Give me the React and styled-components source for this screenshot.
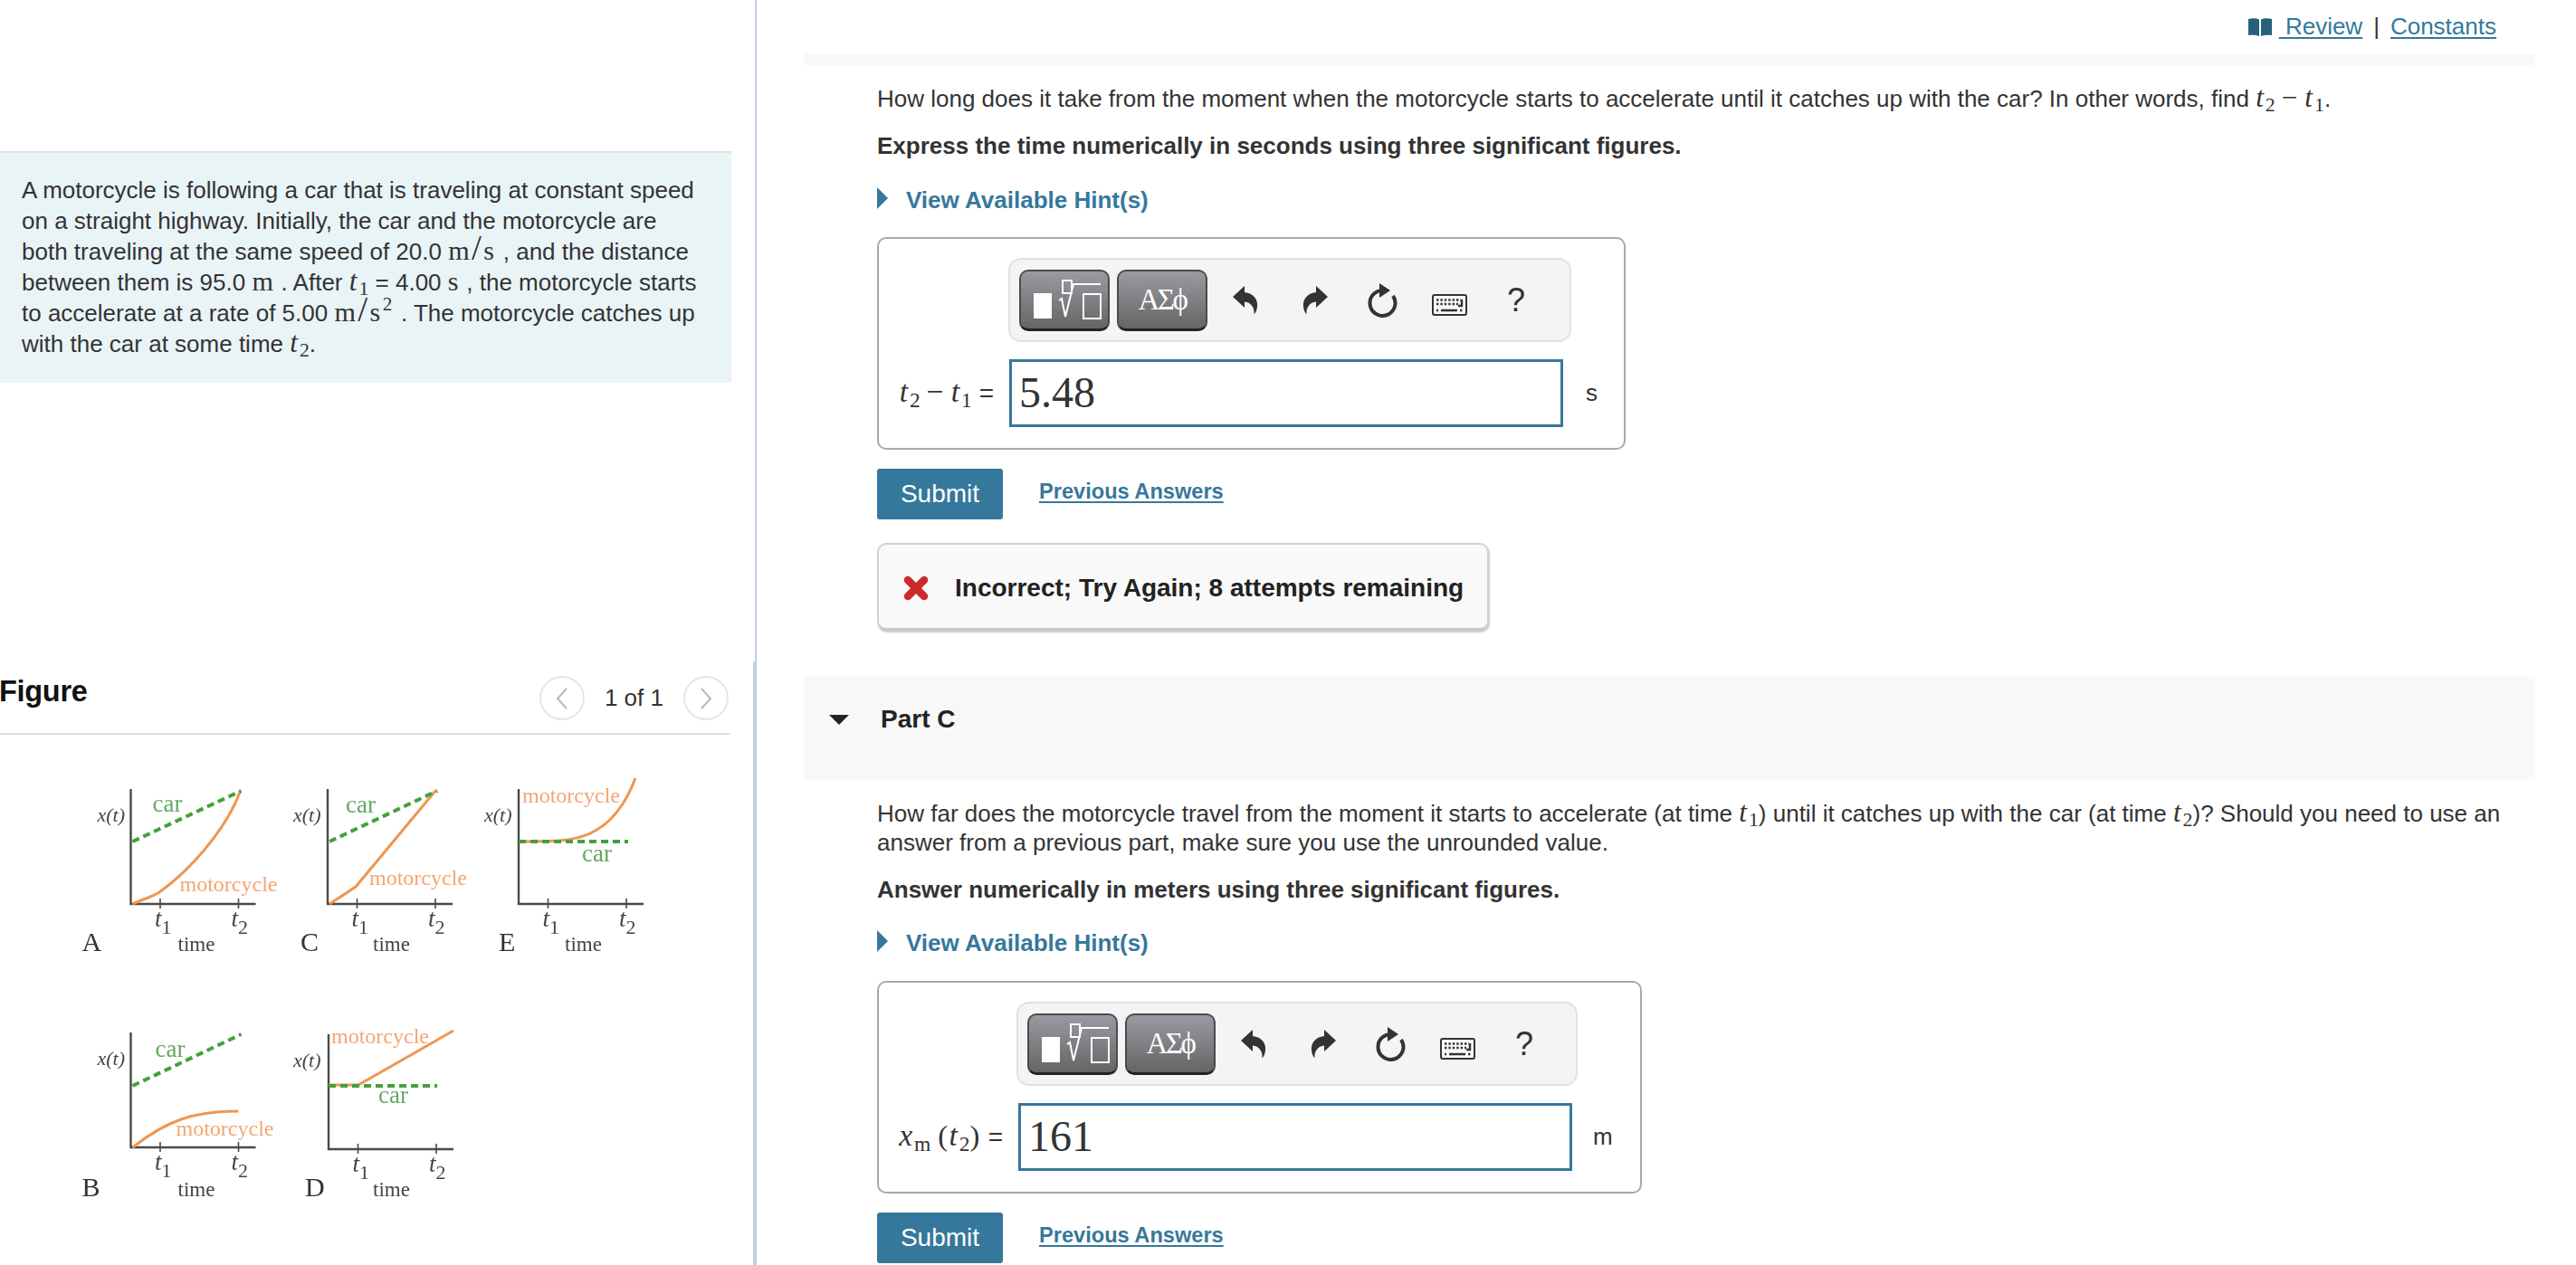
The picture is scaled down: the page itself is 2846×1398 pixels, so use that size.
import React from 'react';
import styled, { createGlobalStyle } from 'styled-components';

const Global = createGlobalStyle`
  html, body { margin: 0; padding: 0; background: #fff; }
  body { font-family: "Liberation Sans", Arial, sans-serif; color: #333; overflow: hidden; }
  * { box-sizing: border-box; }
`;

const Page = styled.div`display: flex; width: 2846px; height: 1398px; overflow: hidden;`;
const LeftColumn = styled.aside`display: flex; flex-direction: column; width: 836px; flex: none;`;
const Intro = styled.section`height: 731px; padding-top: 167px; border-right: 2px solid #c0cfe2;`;
const IntroBox = styled.div`
  width: 808px; height: 256px; padding: 24px 0 0 24px;
  background: #e9f4f7; border-top: 2px solid #dfe0e2;
  font-size: 26px; line-height: 34px; color: #333; white-space: nowrap;
`;
const FigurePane = styled.section`flex: 1; border-right: 4px solid #c0cfe2; min-height: 0;`;
const FigureHeader = styled.div`
  display: flex; align-items: center; justify-content: space-between;
  width: 806px; height: 81px; padding: 17px 1px 15px 0;
  border-bottom: 2px solid #dcdcdc;
`;
const FigureTitle = styled.h2`margin: -15px 0 0 -1px; font-size: 32.5px; font-weight: 700; color: #111; letter-spacing: -.3px;`;
const Pager = styled.div`display: flex; align-items: center; gap: 22px; font-size: 26px; color: #333;`;
const PagerButton = styled.span`
  display: flex; align-items: center; justify-content: center;
  width: 50px; height: 49px; border: 2px solid #e6e6e6; border-radius: 50%; color: #b9b9b9;
`;
const FigureSvg = styled.svg`display: block; filter: blur(.55px);`;

const RightColumn = styled.main`flex: 1; min-width: 0; padding-left: 52px;`;
const TopLinks = styled.nav`
  display: flex; justify-content: flex-end; align-items: center; height: 59px; gap: 8px;
  padding: 10px 88px 10px 0; font-size: 26px; color: #333;
`;
const TextLink = styled.a`color: #36789b; text-decoration: underline; text-underline-offset: 3px; text-decoration-thickness: 2px;`;
const Sep = styled.span`margin: 0 4px; font-size: 26px;`;
const Strip = styled.div`height: 13px; width: 1912px; background: #f8f8f8;`;
const Content = styled.div`padding-left: 81px;`;
const Para = styled.p`
  margin: ${p => p.$top}px 0 0; font-size: 26px; line-height: ${p => p.$lh || 34}px;
  font-weight: ${p => (p.$bold ? 700 : 400)}; color: #333; white-space: nowrap;
`;
const Hint = styled.div`
  display: flex; align-items: center; height: 34px; margin-top: ${p => p.$top}px;
  font-size: 26px; font-weight: 700; color: #36789b; gap: 20px;
`;
const Caret = styled.i`
  width: 0; height: 0; border-style: solid; border-width: 12px 0 12px 12px;
  border-color: transparent transparent transparent #36789b; margin-top: -4px;
`;
const AnswerBox = styled.div`
  width: ${p => p.$w}px; height: ${p => p.$h}px; margin-top: ${p => p.$top}px;
  border: 2px solid #a9a9a9; border-radius: 10px; padding: 21px 0 0 ${p => p.$toolLeft}px;
  background: #fff;
`;
const Toolbar = styled.div`
  display: flex; align-items: center; width: ${p => p.$w}px; height: 93px; padding: 0 0 0 10px;
  background: #f4f4f4; border: 2px solid #e1e1e1; border-radius: 14px;
`;
const PaletteButton = styled.button`
  display: flex; align-items: center; justify-content: center; padding: 0; flex: none;
  width: 100px; height: 68px; margin-right: 8px;
  background: linear-gradient(#9b9aa3, #656565);
  border: 2px solid #4b4b4b; border-bottom: 3px solid #222; border-radius: 10px;
  color: #fff; font: 33px "Liberation Serif", serif; letter-spacing: -2.5px;
`;
const ToolIcon = styled.span`
  display: flex; justify-content: center; align-items: center; flex: none; width: ${p => p.$w}px; color: #333;
  font-size: 36px; line-height: 1; height: 60px; padding-top: ${p => p.$drop || 0}px;
`;
const InputRow = styled.div`
  display: flex; align-items: center; height: 75px; margin: ${p => p.$gap}px 0 0 ${p => p.$left}px;
`;
const MathLabel = styled.label`
  flex: none; width: ${p => p.$w}px; padding-right: 17px; text-align: right; white-space: nowrap;
  font-size: 28px; line-height: 1; color: #333;
`;
const ValueField = styled.div`
  width: ${p => p.$w}px; height: 75px; padding-left: 8px;
  border: 3px solid #36789b; background: #fff;
  font: 48px/67px "Liberation Serif", serif; color: #333;
`;
const Unit = styled.span`margin-left: ${p => p.$gap}px; font-size: 26px; color: #333;`;
const ActionRow = styled.div`display: flex; align-items: center; gap: 40px; margin-top: 21px;`;
const Submit = styled.button`
  width: 139px; height: 56px; padding: 0; border: 0; border-radius: 3px;
  background: #36789b; color: #fff; font: 28px "Liberation Sans", sans-serif;
`;
const PrevLink = styled(TextLink)`font-size: 23.6px; font-weight: 700; margin-top: -6px;`;
const Feedback = styled.div`
  display: flex; align-items: center; gap: 29px; width: 676px; height: 97px; margin-top: 26px;
  padding: 4px 0 0 27px; background: #f9f9f9; border: 2px solid #d0d0d0;
  border-bottom: 3px solid #c8c8c8; border-radius: 10px; box-shadow: 1px 2px 2px #ccc;
  font-size: 28px; font-weight: 700; color: #222; white-space: nowrap;
`;
const PartHeader = styled.div`
  display: flex; align-items: center; width: 1912px; height: 113px; margin-top: 51px;
  padding: 0 0 19px 28px; background: #f8f8f8; font-size: 28px; font-weight: 700; color: #222;
`;
const PartCaret = styled.i`
  width: 0; height: 0; margin-right: 35px; border-style: solid; border-width: 11px 11px 0 11px;
  border-color: #222 transparent transparent transparent;
`;
const MathText = styled.span`font-family: "Liberation Serif", serif; font-size: 1.16em; letter-spacing: 1.5px; line-height: 0;`;
const UnitFraction = styled(MathText)`letter-spacing: 2.4px;`;
const Slash = styled.span`font-size: 1.3em; line-height: 0; font-weight: 400;`;
const Var = styled.i`font-family: "Liberation Serif", serif; font-size: 1.2em; letter-spacing: 2px; line-height: 0;`;
const Minus = styled.span`font-family: "Liberation Serif", serif; font-size: 1.2em; margin: 0 8px 0 7px; line-height: 0;`;
const Sub = styled.sub`font-style: normal; font-size: .7em; line-height: 0; vertical-align: -.25em; letter-spacing: 0;`;
const Sup = styled.sup`font-size: .7em; line-height: 0; vertical-align: .55em;`;

const T = ({ n }) => <Var>t<Sub>{n}</Sub></Var>;
const Mps = ({ sq }) => <UnitFraction>m<Slash>/</Slash>s{sq ? <Sup>2</Sup> : null}</UnitFraction>;

const UndoIcon = ({ flip }) => (
  <svg width="28" height="32" viewBox="0 0 28 32" style={flip ? { transform: 'scaleX(-1)' } : undefined}>
    <path d="M0 12 L13 0 V7 C23 8 28 15 27 23 C26.6 27 25 30 23.5 31.5 C24.4 24 20 18 13 17.5 V24 Z" fill="#333" />
  </svg>
);
const RotateIcon = () => (
  <svg width="34" height="38" viewBox="0 0 34 38">
    <path d="M21 8.4 A14 14 0 1 0 29 14" fill="none" stroke="#333" strokeWidth="4" />
    <path d="M14 0 L26 8 L14 16 Z" fill="#333" />
  </svg>
);
const KeyboardIcon = () => (
  <svg width="39" height="24" viewBox="0 0 39 24">
    <rect x="1" y="1" width="37" height="22" rx="2" fill="#f8f8f8" stroke="#333" strokeWidth="2" />
    <path d="M5 6.5H32M5 11H29M5 18H7M31 18H34" stroke="#333" strokeWidth="2.4" strokeDasharray="2.4 2" fill="none" />
    <path d="M10 18H28M33 6V13H29" stroke="#333" strokeWidth="2.4" fill="none" />
  </svg>
);
const TemplateIcon = () => (
  <svg width="96" height="63" viewBox="0 0 96 63">
    <rect x="14" y="24" width="20" height="28" fill="#fff" />
    <rect x="46" y="10" width="10" height="14" fill="none" stroke="#fff" strokeWidth="2" />
    <path d="M42 32 L45 30 L49 50 L58 14 H88" fill="none" stroke="#fff" strokeWidth="2" />
    <rect x="69" y="25" width="19" height="27" fill="none" stroke="#fff" strokeWidth="2" />
  </svg>
);
const BookIcon = () => (
  <svg width="26" height="20" viewBox="0 0 26 20">
    <path d="M0 1 C4 0 9 0 12 1.5 V20 C9 18.5 4 18.5 0 19 Z M26 1 C22 0 17 0 14 1.5 V20 C17 18.5 22 18.5 26 19 Z" fill="#27617c" />
  </svg>
);
const CrossIcon = () => (
  <svg width="28" height="28" viewBox="0 0 28 28">
    <path d="M5 5 L23 23 M23 5 L5 23" stroke="#cc2a2a" strokeWidth="8.5" strokeLinecap="round" />
  </svg>
);
const Chevron = ({ right }) => (
  <svg width="14" height="26" viewBox="0 0 14 26">
    <path d={right ? 'M2 2 L12 13 L2 24' : 'M12 2 L2 13 L12 24'} fill="none" stroke="#b9b9b9" strokeWidth="2" />
  </svg>
);

const serif = '"Liberation Serif", serif';
const TICK1 = 32.5, TICK2 = 119;

const Plot = ({ p }) => (
  <g transform={`translate(${p.ox} ${p.oy})`} fontFamily={serif}>
    <path d={`M0 -127 V0 H138`} fill="none" stroke="#4a4a4a" strokeWidth="2.4" />
    <path d={`M${TICK1} -6 V5 M${TICK2} -6 V5`} stroke="#4a4a4a" strokeWidth="1.6" />
    <path d={p.moto} fill="none" stroke="#ef9650" strokeWidth="3" />
    <path d={p.car} fill="none" stroke="#45a03c" strokeWidth="4" strokeDasharray="8 5" />
    <text x={p.carL[0]} y={p.carL[1]} fontSize="27" fill="#63a95e">car</text>
    <text x={p.motoL[0]} y={p.motoL[1]} fontSize="24" fill="#f2a673">motorcycle</text>
    <text x={p.xL} y="-91" fontSize="22" fontStyle="italic" fill="#444">x(t)</text>
    <text x={TICK1 - 6} y="25" fontSize="27" fontStyle="italic" fill="#444">t<tspan dy="8" fontSize="22" fontStyle="normal">1</tspan></text>
    <text x={TICK2 - 8} y="25" fontSize="27" fontStyle="italic" fill="#444">t<tspan dy="8" fontSize="22" fontStyle="normal">2</tspan></text>
    <text x={p.letterX} y={p.dy + 52} fontSize="30" fill="#333">{p.letter}</text>
    <text x={p.timeX} y={p.dy + 52} fontSize="23" fill="#444">time</text>
  </g>
);

const plots = [
  { letter: 'A', ox: 144.5, oy: 999, dy: 0, car: 'M2 -69 L122 -125', moto: 'M2 0 C15 -6 25 -8 33 -14 C62 -35 105 -80 121 -125', carL: [24, -102], motoL: [54, -14], xL: -37, letterX: -54, timeX: 52 },
  { letter: 'C', ox: 362, oy: 999, dy: 0, car: 'M2 -69 L121 -125', moto: 'M2 0 L31 -19 L119 -125', carL: [20, -101], motoL: [46, -21], xL: -38, letterX: -30, timeX: 50 },
  { letter: 'E', ox: 573, oy: 999, dy: 0, car: 'M0 -69 L121 -69', moto: 'M0 -69 C50 -70 100 -62 129 -139', carL: [70, -47], motoL: [4, -112], xL: -38, letterX: -22, timeX: 51 },
  { letter: 'B', ox: 144.5, oy: 1268, dy: 2, car: 'M2 -68 L122 -125', moto: 'M2 0 C40 -30 70 -40 119 -40', carL: [27, -100], motoL: [50, -13], xL: -37, letterX: -54, timeX: 52 },
  { letter: 'D', ox: 363, oy: 1270, dy: 0, car: 'M0 -70 L120 -70', moto: 'M0 -71 L33 -71 L138 -131', carL: [55, -51], motoL: [3, -117], xL: -39, letterX: -26, timeX: 49 },
];

const MathEditor = ({ box, label, value, unit }) => (
  <AnswerBox $w={box.w} $h={box.h} $top={box.top} $toolLeft={box.toolLeft}>
    <Toolbar $w={box.toolW}>
      <PaletteButton><TemplateIcon /></PaletteButton>
      <PaletteButton>ΑΣϕ</PaletteButton>
      <ToolIcon $w={68}><UndoIcon /></ToolIcon>
      <ToolIcon $w={86}><UndoIcon flip /></ToolIcon>
      <ToolIcon $w={62}><RotateIcon /></ToolIcon>
      <ToolIcon $w={86} $drop={10}><KeyboardIcon /></ToolIcon>
      <ToolIcon $w={62}>?</ToolIcon>
    </Toolbar>
    <InputRow $left={-box.toolLeft} $gap={box.rowGap}>
      <MathLabel $w={box.labelW}>{label}</MathLabel>
      <ValueField $w={box.fieldW}>{value}</ValueField>
      <Unit $gap={box.unitGap}>{unit}</Unit>
    </InputRow>
  </AnswerBox>
);

export default function App() {
  return (
    <Page>
      <Global />
      <LeftColumn>
        <Intro>
          <IntroBox>
            A motorcycle is following a car that is traveling at constant speed<br />
            on a straight highway. Initially, the car and the motorcycle are<br />
            both traveling at the same speed of 20.0 <Mps /> , and the distance<br />
            between them is 95.0 <MathText>m</MathText> . After <T n="1" /> = 4.00 <MathText>s</MathText> , the motorcycle starts<br />
            to accelerate at a rate of 5.00 <Mps sq /> . The motorcycle catches up<br />
            with the car at some time <T n="2" />.
          </IntroBox>
        </Intro>
        <FigurePane>
          <FigureHeader>
            <FigureTitle>Figure</FigureTitle>
            <Pager>
              <PagerButton><Chevron /></PagerButton>
              1 of 1
              <PagerButton><Chevron right /></PagerButton>
            </Pager>
          </FigureHeader>
          <FigureSvg width="832" height="586" viewBox="0 812 832 586" role="img" aria-label="Five position versus time graphs">
            {plots.map(p => <Plot key={p.letter} p={p} />)}
          </FigureSvg>
        </FigurePane>
      </LeftColumn>
      <RightColumn>
        <TopLinks>
          <BookIcon />
          <TextLink>&nbsp;Review</TextLink>
          <Sep>|</Sep>
          <TextLink>Constants</TextLink>
        </TopLinks>
        <Strip />
        <Content>
          <Para $top={20}>How long does it take from the moment when the motorcycle starts to accelerate until it catches up with the car? In other words, find <T n="2" /><Minus>−</Minus><T n="1" />.</Para>
          <Para $top={18} $bold>Express the time numerically in seconds using three significant figures.</Para>
          <Hint $top={26}><Caret />View Available Hint(s)</Hint>
          <MathEditor
            box={{ w: 827, h: 235, top: 24, toolLeft: 143, toolW: 622, labelW: 144, fieldW: 612, unitGap: 25, rowGap: 19 }}
            label={<><T n="2" /><Minus>−</Minus><T n="1" /> =</>}
            value="5.48"
            unit="s"
          />
          <ActionRow><Submit>Submit</Submit><PrevLink>Previous Answers</PrevLink></ActionRow>
          <Feedback><CrossIcon />Incorrect; Try Again; 8 attempts remaining</Feedback>
        </Content>
        <PartHeader><PartCaret />Part C</PartHeader>
        <Content>
          <Para $top={22} $lh={32}>How far does the motorcycle travel from the moment it starts to accelerate (at time <T n="1" />) until it catches up with the car (at time <T n="2" />)? Should you need to use an<br />answer from a previous part, make sure you use the unrounded value.</Para>
          <Para $top={19} $bold>Answer numerically in meters using three significant figures.</Para>
          <Hint $top={25}><Caret />View Available Hint(s)</Hint>
          <MathEditor
            box={{ w: 845, h: 235, top: 25, toolLeft: 152, toolW: 620, labelW: 154, fieldW: 612, unitGap: 23, rowGap: 19 }}
            label={<><Var>x<Sub>m</Sub></Var> <MathText>(</MathText><T n="2" /><MathText>)</MathText> =</>}
            value="161"
            unit="m"
          />
          <ActionRow><Submit>Submit</Submit><PrevLink>Previous Answers</PrevLink></ActionRow>
        </Content>
      </RightColumn>
    </Page>
  );
}
